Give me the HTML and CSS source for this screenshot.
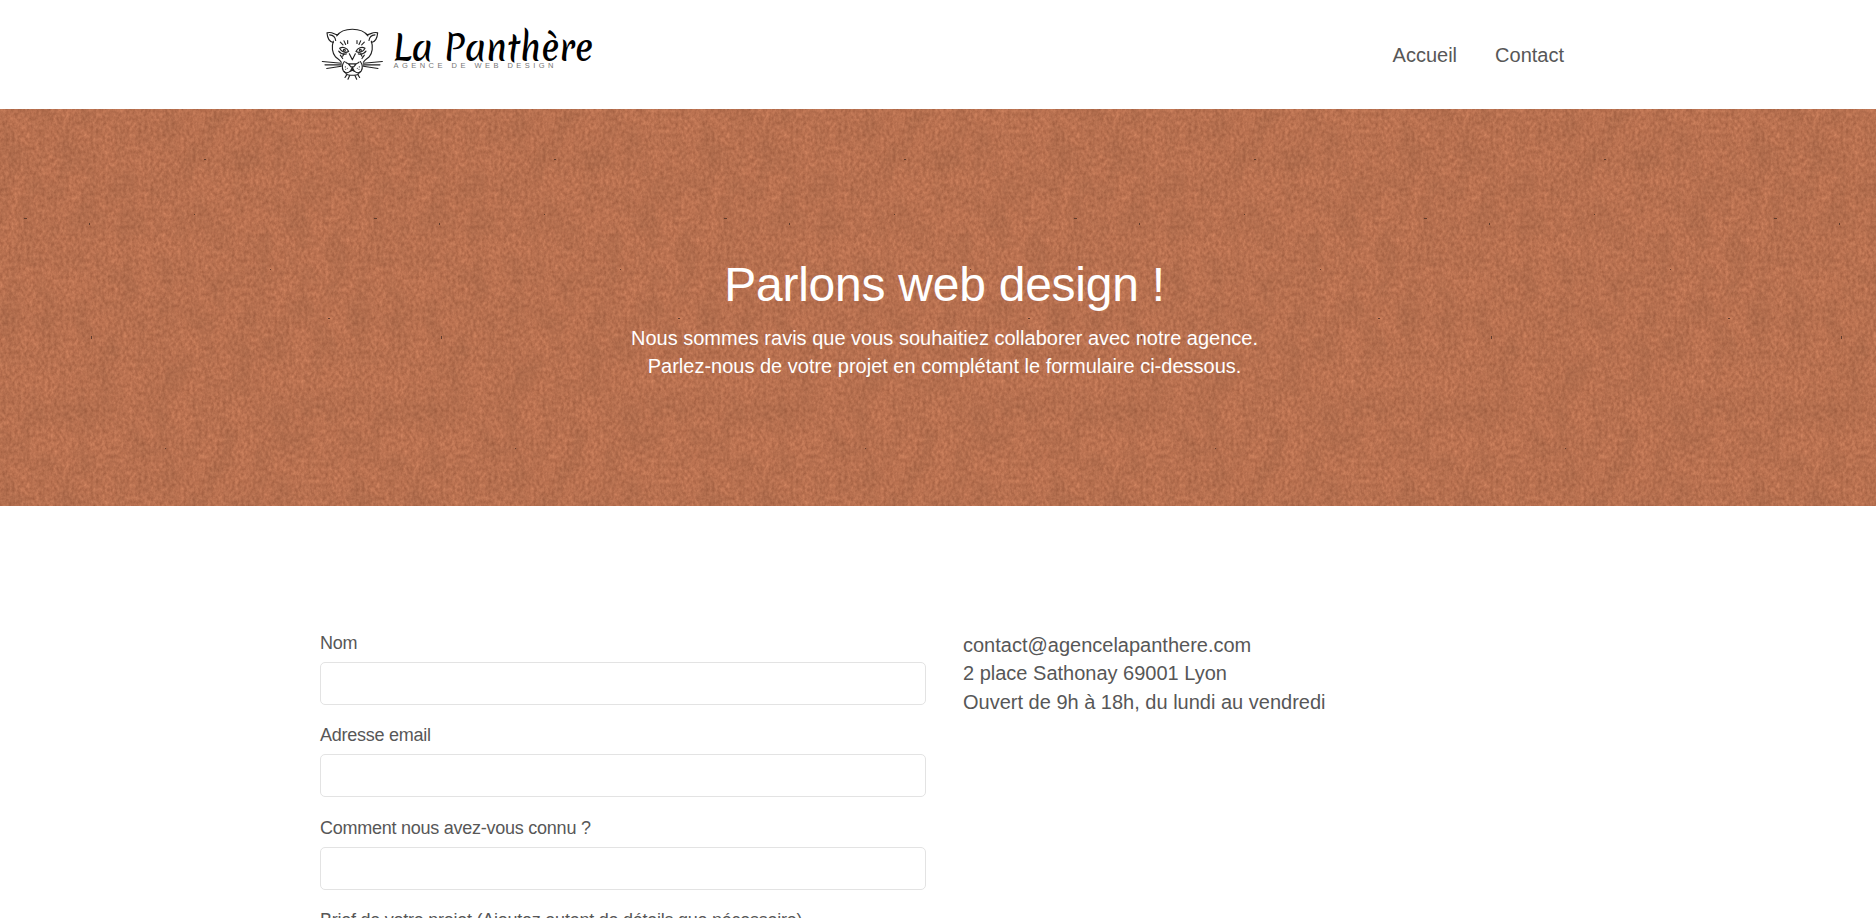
FILE: index.html
```html
<!DOCTYPE html>
<html lang="fr">
<head>
<meta charset="utf-8">
<title>La Panthère – Contact</title>
<link rel="stylesheet" href="styles.css">
</head>
<body>
<header class="header">
  <a class="logo" aria-label="La Panthère">
    <svg width="280" height="60" viewBox="0 0 280 60">
      <g transform="translate(-7 -1.8) scale(.3333)" fill="none" stroke="#222" stroke-width="3.4" stroke-linecap="round" stroke-linejoin="round">
        <path d="M56 38C66 24 82 18 103 18s37 6 47 20M46 54C40 70 43 90 52 100c5 6 12 7 18 17M160 54c6 16 3 36-6 46-5 6-12 7-18 17"/>
        <path d="M60 34C50 36 44 24 27 29c1 13 6 27 19 29M35 35c10 1 17 8 18 17M146 34c10 2 18-10 33-5-1 13-6 27-19 29M171 35c-10 1-17 8-18 17"/>
        <path d="M67 57l8 8M78 53l5 11M89 52v9M139 57l-8 8M128 53l-5 11M117 52v9M67 96l7 10M78 92l-4 7M139 96l-7 10M128 92l4 7"/>
        <path d="M65 75c9-5 22-2 27 10-11 5-20 2-27-10zM141 75c-9-5-22-2-27 10 11 5 20 2 27-10zM62 84c5 7 14 10 23 8M144 84c-5 7-14 10-23 8"/>
        <circle cx="79" cy="81" r="3"/><circle cx="127" cy="81" r="3"/>
        <path d="M94 92l9 18 9-18M79 115c-6 8-8 18-3 28 5 8 16 8 22-1l5-9 5 9c6 9 17 9 22 1 5-10 3-20-3-28M83 117c5 6 8 2 12 7M123 117c-5 6-8 2-12 7M91 122h24l-8 9h-8zM103 131v11M80 145c3 13 14 11 23 11s20 2 23-11M96 145l7-4 7 4"/>
        <path d="M70 120L13 115M70 125H21M70 129L26 136M136 120l57-5M136 125h50M136 129l44 7M86 155l-5 8M95 157l-5 11M111 157l5 11M120 155l5 8M82 131v.1M88 135v.1M83 138v.1M124 131v.1M118 135v.1M123 138v.1"/>
      </g>
      <text class="logo-name" x="68" y="36" textLength="200" lengthAdjust="spacingAndGlyphs">La Panthère</text>
      <text class="logo-tag" x="68.500" y="43.200" textLength="160">AGENCE DE WEB DESIGN</text>
    </svg>
  </a>
  <nav class="nav"><a>Accueil</a><a>Contact</a></nav>
</header>
<section class="hero">
  <svg class="texture" width="100%" height="100%" aria-hidden="true">
    <defs>
      <filter id="grain" x="0" y="0" width="100%" height="100%" color-interpolation-filters="sRGB">
        <feTurbulence type="fractalNoise" baseFrequency=".33 .24" numOctaves="3" seed="8" stitchTiles="stitch"/>
        <feColorMatrix values=".22 0 0 0 .625  .18 0 0 0 .359  .15 0 0 0 .243  0 0 0 0 1"/>
      </filter>
      <filter id="mottle" x="0" y="0" width="100%" height="100%" color-interpolation-filters="sRGB">
        <feTurbulence type="fractalNoise" baseFrequency=".05 .03" numOctaves="4" seed="3" stitchTiles="stitch"/>
        <feColorMatrix values="0 0 0 0 .46  0 0 0 0 .29  0 0 0 0 .20  .35 0 0 0 -.11"/>
      </filter>
      <pattern id="paper" width="350" height="350" patternUnits="userSpaceOnUse">
        <rect width="350" height="350" filter="url(#grain)"/>
        <rect width="350" height="350" filter="url(#mottle)"/>
        <path fill="#603b2b" d="M91 227h1v3h-1zM204 50h2v1h-2zM194 105h1v1h-1zM24 109h3v1h-3zM89 114h1v2h-1zM165 339h1v1h-1zM270 160h1v1h-1zM328 209h2v1h-2z"/>
      </pattern>
    </defs>
    <rect width="100%" height="100%" fill="url(#paper)"/>
  </svg>
  <div class="hero-content">
    <h1>Parlons web design !</h1>
    <p>Nous sommes ravis que vous souhaitiez collaborer avec notre agence.<br>Parlez-nous de votre projet en complétant le formulaire ci-dessous.</p>
  </div>
</section>
<main class="contact">
  <form class="form">
    <label for="nom">Nom</label><input id="nom">
    <label for="email">Adresse email</label><input id="email">
    <label for="source">Comment nous avez-vous connu ?</label><input id="source">
    <label for="brief">Brief de votre projet (Ajoutez autant de détails que nécessaire)</label><textarea id="brief"></textarea>
  </form>
  <address class="details">contact@agencelapanthere.com<br>2 place Sathonay 69001 Lyon<br>Ouvert de 9h à 18h, du lundi au vendredi</address>
</main>
</body>
</html>
```
FILE: styles.css
```css
* { box-sizing: border-box; }
html, body { height: 100%; }
body { margin: 0; overflow: hidden; background: #fff; color: #575757; font: 20px/28.5px "Liberation Sans", Arial, sans-serif; }
.header { height: 109px; padding: 0 312px 0 320px; display: flex; align-items: center; justify-content: space-between; }
.logo { display: block; height: 60px; }
.logo svg { display: block; overflow: visible; margin-left: 5px; }
.logo-name { font: 500 35px "Merienda", cursive; fill: #000; }
.logo-tag { font: 7.500px "Liberation Sans", sans-serif; fill: #777; }
.nav { display: flex; gap: 38px; padding-top: 2px; }
.hero { position: relative; height: 397px; background: #ba7250; color: #fff; text-align: center; padding: 143px 0 0 13px; }
.texture { position: absolute; inset: 0; display: block; }
.hero-content { position: relative; }
h1 { margin: 0; font-size: 48px; font-weight: 400; line-height: 66px; letter-spacing: -.25px; }
.hero p { margin: 6px 0 0; line-height: 28px; }
.contact { display: grid; grid-template-columns: 606px 606px; gap: 37px; padding: 125px 0 0 320px; }
.form { display: flex; flex-direction: column; font-size: 18px; letter-spacing: -.25px; }
.form label { height: 25px; line-height: 25px; margin-bottom: 6px; }
.form input { height: 43px; margin-bottom: 18.300px; border: 1px solid #e3e3e3; border-radius: 5px; background: #fff; }
.form textarea { height: 120px; border: 1px solid #e3e3e3; border-radius: 5px; resize: none; }
.details { font-style: normal; line-height: 28.400px; }
```
